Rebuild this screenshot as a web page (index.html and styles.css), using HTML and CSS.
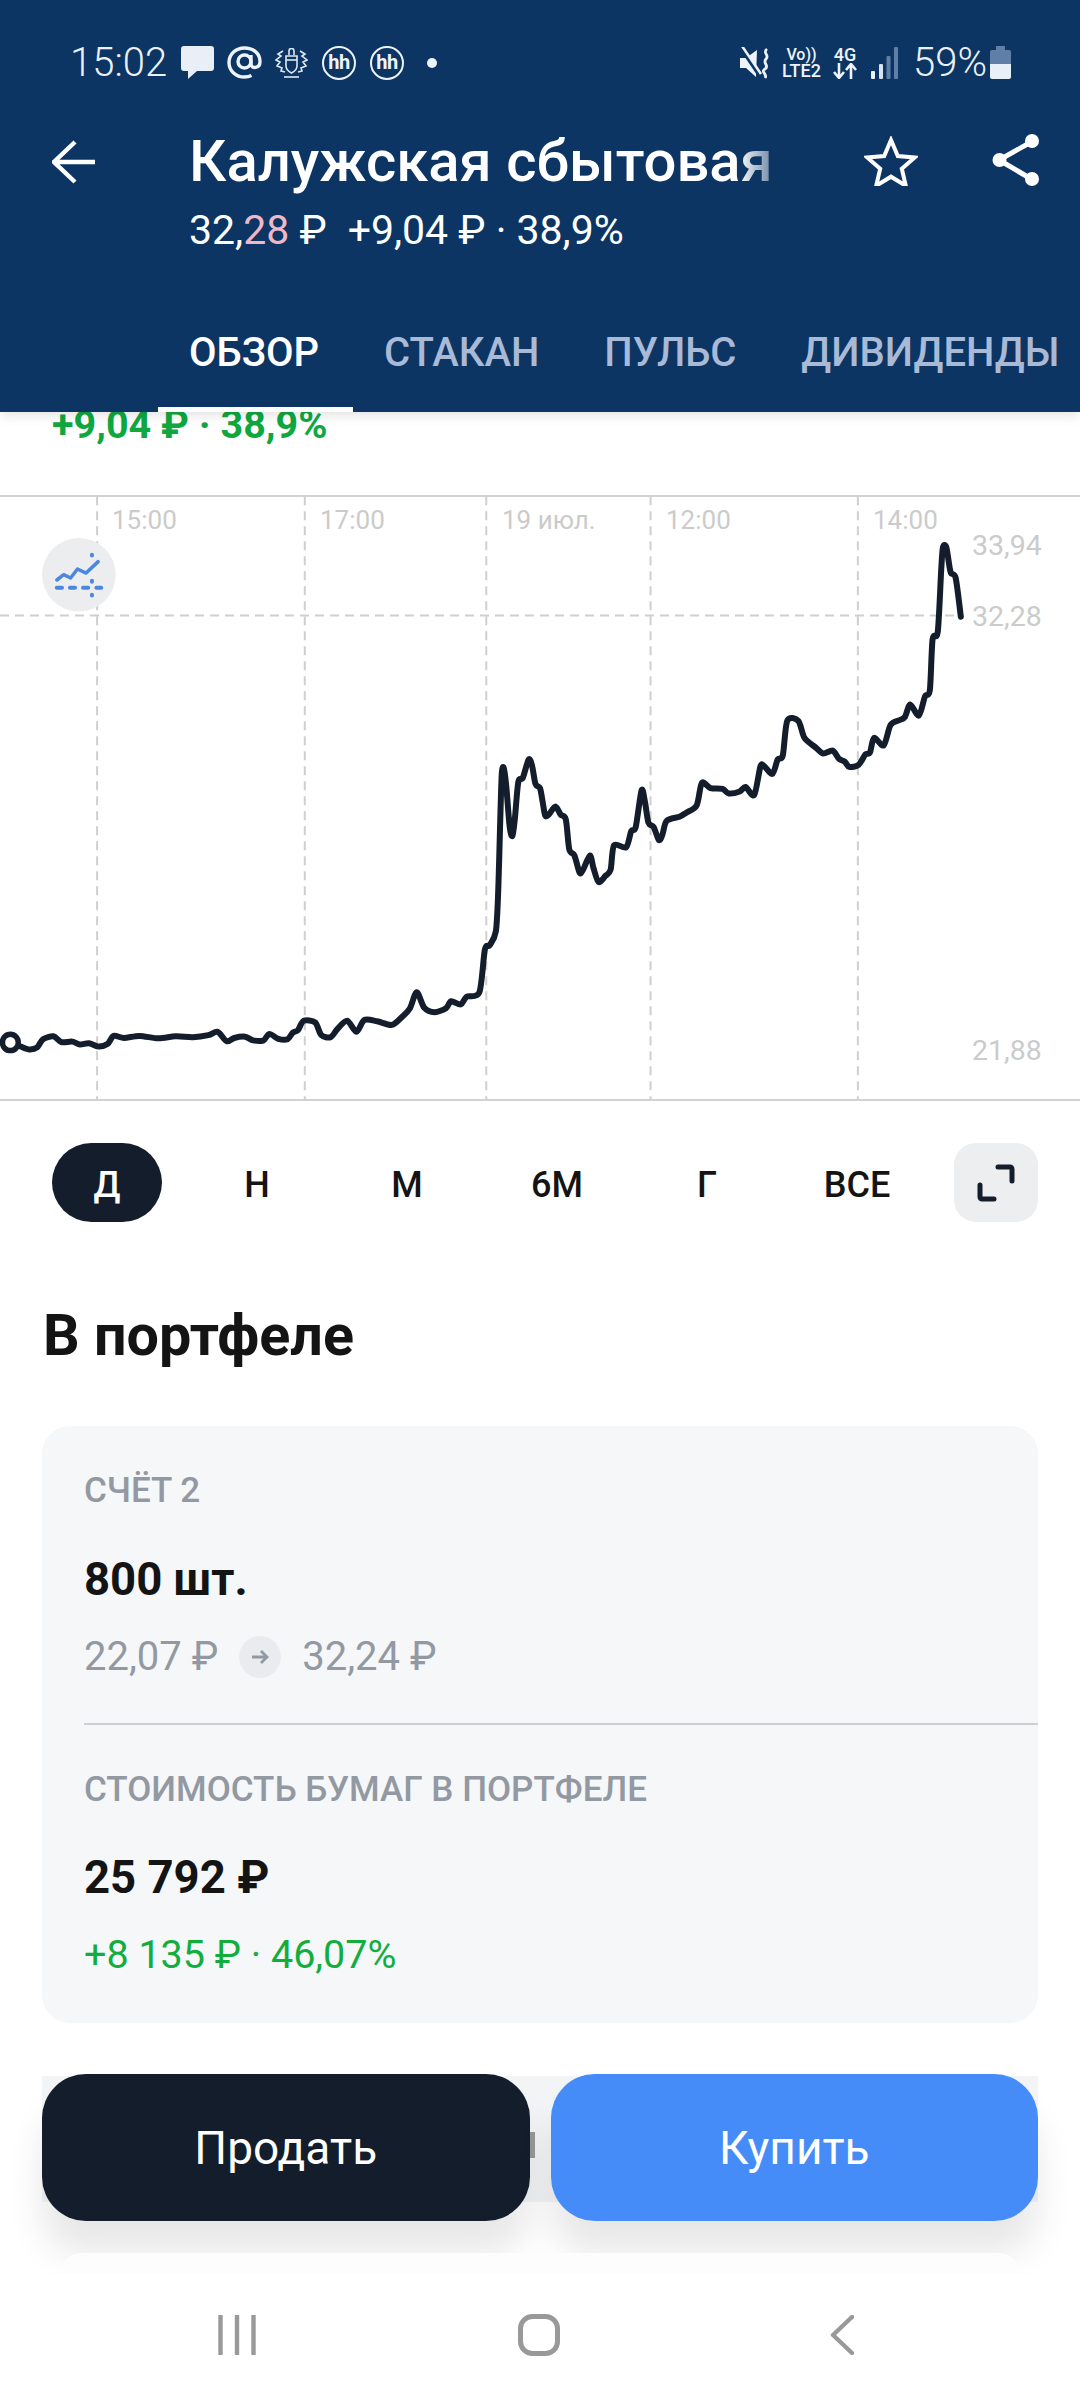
FILE: index.html
```html
<!DOCTYPE html>
<html lang="ru">
<head>
<meta charset="utf-8">
<title>Калужская сбытовая</title>
<link rel="stylesheet" href="styles.css">
</head>
<body>
<div class="app">
  <header class="topbar">
    <div class="status">
      <div class="status-group">
        <span class="time">15:02</span>
        <svg class="i-bubble" viewBox="0 0 33 33"><path d="M3 0h27a3 3 0 0 1 3 3v19a3 3 0 0 1-3 3H16l-9 8v-8H3a3 3 0 0 1-3-3V3a3 3 0 0 1 3-3z" fill="#e9eff7"/></svg>
        <svg class="i-at" viewBox="0 0 35 33"><g fill="none" stroke="#eef3f9" stroke-width="3.4"><circle cx="17.5" cy="15.5" r="6.5"/><path d="M24 9v9c0 5 9 5 9-2.500C33 7 26 2 17.500 2S2 8 2 16.500 9 31 17.500 31c3 0 5-.5 7-1.500"/></g></svg>
        <svg class="i-crest" viewBox="0 0 33 30"><g fill="none" stroke="#dfe8f2" stroke-width="1.600"><path d="M14 7V3a2.500 2.500 0 0 1 5 0v4"/><path d="M11 8h11v10c0 4-2.500 5.500-5.500 7-3-1.500-5.500-3-5.500-7z"/><path d="M11 12h11"/><path d="M8 3 3 6l3 2-5 4 4 2-3 4 5 2-1 3 4 1M25 3l5 3-3 2 5 4-4 2 3 4-5 2 1 3-4 1"/><path d="M9 29h15"/></g></svg>
        <span class="hh">hh</span>
        <span class="hh">hh</span>
        <span class="dot"></span>
      </div>
      <div class="status-group">
        <svg class="i-mute" viewBox="0 0 32 32"><path d="M0 11h6L17 3l-1 27-10-9H0z" fill="#eef3f9"/><path d="M1 1l19 28" stroke="#0c3564" stroke-width="4"/><path d="M1 2l19 28" stroke="#eef3f9" stroke-width="2.500" transform="translate(1 -3)"/><path d="M27 2c-5 4 3 6-1 10s4 7-1 10 3 5 0 9" fill="none" stroke="#eef3f9" stroke-width="2.800"/></svg>
        <div class="volte"><span class="vo">Vo))</span><span class="lte">LTE2</span></div>
        <div class="net"><span>4G</span><svg viewBox="0 0 24 16"><path d="M6 0v14M1 9l5 6 5-6M18 16V2M13 7l5-6 5 6" fill="none" stroke="#eef3f9" stroke-width="2.600"/></svg></div>
        <svg class="i-signal" viewBox="0 0 27 32"><rect x="0" y="24" width="4" height="8" rx="1" fill="#eef3f9"/><rect x="8" y="17" width="4" height="15" rx="1" fill="#d9e2ee"/><rect x="15.500" y="9" width="4" height="23" rx="1" fill="#5f7fa6"/><rect x="23" y="0" width="4" height="32" rx="1" fill="#5f7fa6"/></svg>
        <span class="batt-text">59%</span>
        <svg class="i-batt" viewBox="0 0 21 33"><path d="M6 0h9v4h4a2 2 0 0 1 2 2v12H0V6a2 2 0 0 1 2-2h4z" fill="#5f7fa6"/><path d="M0 18h21v13a2 2 0 0 1-2 2H2a2 2 0 0 1-2-2z" fill="#e9eff7"/></svg>
      </div>
    </div>
    <div class="titlebar">
      <svg class="i-back" viewBox="0 0 44 44"><path d="M43 22H3M23 2 2 22l21 20" fill="none" stroke="#fff" stroke-width="4.400"/></svg>
      <div class="title-block">
        <h1 class="title">Калужская сбытовая</h1>
        <p class="subtitle">32,<span class="pink">28</span> ₽<span class="sub-gap">+9,04 ₽ · 38,9%</span></p>
      </div>
      <svg class="i-star" viewBox="0 0 54 50"><path d="M27 4l6.800 16 17 1.500-13 11.300 4 17L27 40.700 12.200 49.800l4-17-13-11.300 17-1.500z" fill="none" stroke="#fff" stroke-width="4"/></svg>
      <svg class="i-share" viewBox="0 0 48 54"><path d="M41 7 7 26l34 20" fill="none" stroke="#fff" stroke-width="5"/><circle cx="40" cy="7" r="7" fill="#fff"/><circle cx="7.500" cy="26" r="7" fill="#fff"/><circle cx="40" cy="45" r="7" fill="#fff"/></svg>
    </div>
    <nav class="tabs">
      <span class="tab tab-on">ОБЗОР</span>
      <span class="tab">СТАКАН</span>
      <span class="tab">ПУЛЬС</span>
      <span class="tab">ДИВИДЕНДЫ</span>
    </nav>
  </header>

  <main class="content">
    <div class="change">+9,04 ₽ · 38,9%</div>

    <section class="chart">
      <svg class="plot" viewBox="0 0 3136 1568" preserveAspectRatio="none">
        <g class="grid">
          <line x1="282" y1="40" x2="282" y2="1520"/>
          <line x1="885" y1="40" x2="885" y2="1520"/>
          <line x1="1412" y1="40" x2="1412" y2="1520"/>
          <line x1="1889" y1="40" x2="1889" y2="1520"/>
          <line x1="2491" y1="40" x2="2491" y2="1520"/>
          <line x1="0" y1="332" x2="2770" y2="332"/>
        </g>
        <ellipse cx="229" cy="232" rx="107" ry="90" fill="#ebedef"/>
        <polyline class="mini" points="165,245 185,232 205,240 225,218 250,228 285,200"/>
        <g class="mini-dots">
          <line x1="165" y1="264" x2="180" y2="264"/><line x1="203" y1="264" x2="218" y2="264"/><line x1="241" y1="264" x2="256" y2="264"/><line x1="280" y1="264" x2="294" y2="264"/>
          <line x1="267" y1="183" x2="267" y2="185"/><line x1="267" y1="247" x2="267" y2="249"/><line x1="267" y1="281" x2="267" y2="283"/>
        </g>
        <path class="price" id="price-line" data-points="30,1378 60,1388 85,1395 108,1390 125,1370 155,1363 178,1377 210,1376 232,1383 258,1380 285,1388 312,1382 330,1362 360,1367 405,1362 460,1368 510,1363 560,1365 605,1360 632,1352 658,1375 680,1367 712,1364 735,1373 765,1373 782,1357 808,1369 835,1370 850,1354 865,1348 882,1325 915,1329 933,1360 960,1365 980,1345 1008,1325 1035,1352 1058,1323 1095,1326 1138,1335 1168,1315 1190,1295 1210,1255 1232,1293 1262,1304 1295,1294 1310,1277 1338,1285 1355,1266 1392,1255 1408,1150 1422,1140 1440,1105 1447,1000 1452,850 1457,720 1463,706 1470,750 1480,850 1488,872 1495,830 1505,740 1518,730 1535,685 1545,700 1555,745 1568,755 1576,790 1583,822 1593,820 1613,800 1628,820 1643,832 1653,905 1668,920 1683,962 1693,955 1713,920 1723,950 1738,985 1758,970 1773,955 1783,895 1818,900 1833,860 1846,850 1863,760 1873,790 1883,840 1898,850 1913,882 1923,870 1936,835 1973,825 1993,815 2023,797 2038,742 2063,755 2098,757 2116,768 2148,763 2165,752 2190,772 2208,702 2218,700 2243,720 2258,685 2273,675 2286,590 2318,590 2336,632 2368,655 2390,670 2418,663 2436,683 2453,690 2466,703 2493,698 2513,672 2526,668 2538,632 2566,650 2586,600 2613,588 2628,580 2643,550 2668,577 2686,530 2700,515 2708,390 2723,372 2733,220 2738,165 2748,165 2760,225 2775,240 2790,335" d="M30 1378"/>
        <ellipse class="start" cx="30" cy="1378" rx="23" ry="20"/>
      </svg>
      <span class="tick tick-1">15:00</span>
      <span class="tick tick-2">17:00</span>
      <span class="tick tick-3">19 июл.</span>
      <span class="tick tick-4">12:00</span>
      <span class="tick tick-5">14:00</span>
      <span class="level level-1">33,94</span>
      <span class="level level-2">32,28</span>
      <span class="level level-3">21,88</span>
    </section>

    <div class="ranges">
      <span class="range range-on">Д</span>
      <span class="range">Н</span>
      <span class="range">М</span>
      <span class="range">6М</span>
      <span class="range">Г</span>
      <span class="range">ВСЕ</span>
      <span class="expand"><svg viewBox="0 0 38 38"><path d="M21 3h12a2 2 0 0 1 2 2v12M17 35H5a2 2 0 0 1-2-2V21" fill="none" stroke="#141d2b" stroke-width="5" stroke-linecap="round"/></svg></span>
    </div>

    <h2 class="section-title">В портфеле</h2>

    <section class="card">
      <div class="label">СЧЁТ 2</div>
      <div class="value value-1">800 шт.</div>
      <div class="prices">
        <span>22,07 ₽</span>
        <span class="arrow"><svg viewBox="0 0 18 16"><path d="M1 8h15M10 2l6 6-6 6" fill="none" stroke="#9299a2" stroke-width="2.800"/></svg></span>
        <span>32,24 ₽</span>
      </div>
      <div class="divider"></div>
      <div class="label">СТОИМОСТЬ БУМАГ В ПОРТФЕЛЕ</div>
      <div class="value value-2">25 792 ₽</div>
      <div class="gain">+8 135 ₽ · 46,07%</div>
    </section>

    <div class="behind"><span class="behind-mark"></span></div>
  </main>

  <div class="dock">
    <div class="actions">
      <button class="btn btn-sell">Продать</button>
      <button class="btn btn-buy">Купить</button>
    </div>
    <div class="next-card"></div>
    <nav class="sysnav">
      <svg class="i-recents" viewBox="0 0 38 40"><path d="M2.500 1v38M19 1v38M35.500 1v38" stroke="#999" stroke-width="4.400" stroke-linecap="round"/></svg>
      <svg class="i-home" viewBox="0 0 42 42"><rect x="2.500" y="2.500" width="37" height="37" rx="12" fill="none" stroke="#999" stroke-width="5"/></svg>
      <svg class="i-navback" viewBox="0 0 24 40"><path d="M22 2 3 20l19 18" fill="none" stroke="#999" stroke-width="4.400" stroke-linecap="round" stroke-linejoin="round"/></svg>
    </nav>
  </div>
</div>
<script src="chart.js"></script>
</body>
</html>
```
FILE: chart.js
```js
// Draws the price series as a smooth curve through its data points.
(function () {
  var line = document.getElementById('price-line');
  var pts = line.getAttribute('data-points').trim().split(/\s+/).map(function (p) {
    return p.split(',').map(Number);
  });
  var d = 'M' + pts[0][0] + ' ' + pts[0][1];
  for (var i = 0; i < pts.length - 1; i++) {
    var a = pts[Math.max(i - 1, 0)], b = pts[i], c = pts[i + 1], e = pts[Math.min(i + 2, pts.length - 1)];
    var k = 0.14;
    d += 'C' + (b[0] + (c[0] - a[0]) * k) + ' ' + (b[1] + (c[1] - a[1]) * k) + ' ' +
         (c[0] - (e[0] - b[0]) * k) + ' ' + (c[1] - (e[1] - b[1]) * k) + ' ' + c[0] + ' ' + c[1];
  }
  line.setAttribute('d', d);
})();
```
FILE: styles.css
```css
* { box-sizing: border-box; }
html, body { margin: 0; padding: 0; background: #fff; }
body { font-family: Roboto, "Noto Sans", sans-serif; color: #141414; }
.app { position: relative; width: 1080px; height: 2400px; overflow: hidden; background: #fff; }

/* header */
.topbar { position: relative; z-index: 5; height: 412px; background: #0c3564; color: #fff; box-shadow: 0 3px 12px rgba(0,0,0,.12); }
.status { display: flex; justify-content: space-between; align-items: center; height: 120px; padding: 5px 69px 0 70px; }
.status-group { display: flex; align-items: center; }
.time { width: 95px; font-size: 40px; font-weight: 300; color: #eaf1f8; line-height: 40px; white-space: nowrap; }
.i-bubble { width: 33px; height: 33px; margin-left: 16px; }
.i-at { width: 35px; height: 33px; margin-left: 13px; }
.i-crest { width: 33px; height: 30px; margin-left: 13px; }
.hh { width: 34px; height: 34px; margin-left: 14px; border: 2px solid #eef3f9; border-radius: 50%; font-size: 20px; font-weight: 700; line-height: 29px; text-align: center; color: #eef3f9; letter-spacing: -.5px; }
.dot { width: 10px; height: 10px; margin-left: 23px; border-radius: 50%; background: #eef3f9; }
.i-mute { width: 32px; height: 32px; }
.volte { display: flex; flex-direction: column; width: 41px; margin-left: 9px; color: #eef3f9; text-align: center; white-space: nowrap; font-weight: 500; }
.vo { height: 15px; font-size: 16px; line-height: 15px; }
.lte { height: 17px; font-size: 18px; line-height: 17px; }
.net { display: flex; flex-direction: column; width: 24px; margin-left: 11px; font-size: 18px; font-weight: 500; line-height: 16px; color: #eef3f9; text-align: center; }
.net svg { width: 24px; height: 16px; }
.i-signal { width: 27px; height: 32px; margin-left: 14px; }
.batt-text { width: 68px; margin-left: 15px; margin-right: 2px; font-size: 40px; font-weight: 300; line-height: 40px; color: #eaf1f8; white-space: nowrap; }
.i-batt { width: 21px; height: 33px; margin-left: 7px; }

.titlebar { display: flex; align-items: flex-start; height: 140px; }
.i-back { width: 44px; height: 44px; margin: 20px 0 0 52px; flex: none; }
.title-block { width: 584px; margin-left: 93px; flex: none; }
.title { margin: 0; font-size: 58px; font-weight: 500; line-height: 82px; white-space: nowrap; overflow: hidden;
  -webkit-mask-image: linear-gradient(to right, #000 94%, rgba(0,0,0,.4) 100%); mask-image: linear-gradient(to right, #000 94%, rgba(0,0,0,.4) 100%); }
.subtitle { margin: 5px 0 0; font-size: 41px; line-height: 46px; white-space: nowrap; }
.pink { color: #f0b8c4; }
.sub-gap { margin-left: 21px; }
.i-star { width: 54px; height: 50px; margin: 16px 0 0 91px; flex: none; }
.i-share { width: 48px; height: 54px; margin: 14px 0 0 74px; flex: none; }

.tabs { display: flex; height: 92px; margin-top: 60px; padding-left: 189px; gap: 65px; }
.tab { position: relative; height: 92px; font-size: 40px; font-weight: 500; line-height: 65px; color: #a8bad6; white-space: nowrap; }
.tab-on { color: #fff; }
.tab-on::after { content: ""; position: absolute; left: -31px; right: -34px; bottom: 0; height: 5px; background: #fff; }

/* content */
.content { display: flex; flex-direction: column; }
.change { height: 40px; margin-top: -7px; padding-left: 52px; font-size: 39.500px; font-weight: 700; line-height: 40px; color: #0fa83f; white-space: nowrap; }
.chart { position: relative; height: 606px; margin-top: 50px; border-top: 2px solid #d2d2d2; border-bottom: 2px solid #d2d2d2; }
.plot { position: absolute; left: 0; top: -17px; width: 1080px; height: 640px; }
.grid line { stroke: #cfcfcf; stroke-width: 2; stroke-dasharray: 9 6; vector-effect: non-scaling-stroke; }
.mini { fill: none; stroke: #4d86e0; stroke-width: 3.500; vector-effect: non-scaling-stroke; stroke-linejoin: round; stroke-linecap: round; }
.mini-dots line { stroke: #4d86e0; stroke-width: 4; stroke-linecap: round; vector-effect: non-scaling-stroke; }
.price { fill: none; stroke: #141d2b; stroke-width: 6; stroke-linejoin: round; stroke-linecap: round; vector-effect: non-scaling-stroke; }
.start { fill: #fff; stroke: #141d2b; stroke-width: 5.500; vector-effect: non-scaling-stroke; }
.tick, .level { position: absolute; color: #cbcbcb; white-space: nowrap; font-size: 26px; line-height: 30px; }
.tick { top: 8px; }
.tick-1 { left: 112px; }
.tick-2 { left: 320px; }
.tick-3 { left: 502px; }
.tick-4 { left: 666px; }
.tick-5 { left: 873px; }
.level { left: 972px; font-size: 28.500px; }
.level-1 { top: 34px; }
.level-2 { top: 105px; }
.level-3 { top: 539px; }

.ranges { display: flex; align-items: center; gap: 40px; height: 79px; margin-top: 42px; padding: 0 42px 0 52px; }
.range { width: 110px; height: 79px; padding-top: 3px; border-radius: 40px; font-size: 36px; font-weight: 500; line-height: 79px; text-align: center; color: #141414; }
.range-on { background: #141d2b; color: #fff; }
.expand { display: flex; align-items: center; justify-content: center; width: 84px; height: 79px; margin-left: auto; border-radius: 22px; background: #eceef0; }
.expand svg { width: 38px; height: 38px; }

.section-title { height: 70px; margin: 79px 0 0 43px; font-size: 57.500px; font-weight: 700; line-height: 70px; color: #141414; }

.card { height: 597px; margin: 55px 42px 0; padding: 45px 0 0 42px; border-radius: 28px; background: #f5f7f9; }
.label { font-size: 35px; font-weight: 500; line-height: 40px; color: #9299a2; white-space: nowrap; }
.value { margin-top: 44px; font-size: 45.500px; font-weight: 700; line-height: 50px; color: #141414; }
.prices { display: flex; align-items: center; height: 42px; margin-top: 31px; font-size: 40px; line-height: 42px; color: #9299a2; }
.arrow { display: flex; align-items: center; justify-content: center; width: 42px; height: 42px; margin: 0 21px; border-radius: 50%; background: #e9ebee; }
.arrow svg { width: 18px; height: 16px; }
.divider { height: 2px; margin: 45px 0 45px; background: #ccd0d5; }
.value-2 { margin-top: 43px; }
.gain { margin-top: 31px; font-size: 39.500px; line-height: 42px; color: #12ad3d; white-space: nowrap; }

.behind { position: relative; height: 126px; margin: 53px 42px 0; background: #f3f4f6; }
.behind-mark { position: absolute; left: 488px; top: 56px; width: 5px; height: 26px; background: #9a9a9a; }

/* floating dock */
.dock { position: absolute; left: 0; right: 0; bottom: 0; z-index: 4; display: flex; flex-direction: column; }
.actions { display: flex; gap: 21px; height: 147px; padding: 0 42px; }
.btn { flex: 1; height: 147px; padding: 0; border: 0; border-radius: 44px; font-family: Roboto, sans-serif; font-size: 46px; color: #fff; box-shadow: 0 34px 36px rgba(0,0,0,.095); }
.btn-sell { background: #141d2b; }
.btn-buy { background: #468cf8; }
.next-card { position: relative; height: 21px; margin: 32px 60px 0; border-radius: 30px 30px 0 0; background: #fdfdfd; }
.sysnav { position: relative; display: flex; height: 126px; background: #fff; }
.i-recents { position: absolute; left: 218px; top: 41px; width: 38px; height: 40px; }
.i-home { position: absolute; left: 518px; top: 40px; width: 42px; height: 42px; }
.i-navback { position: absolute; left: 830px; top: 41px; width: 24px; height: 40px; }
```
